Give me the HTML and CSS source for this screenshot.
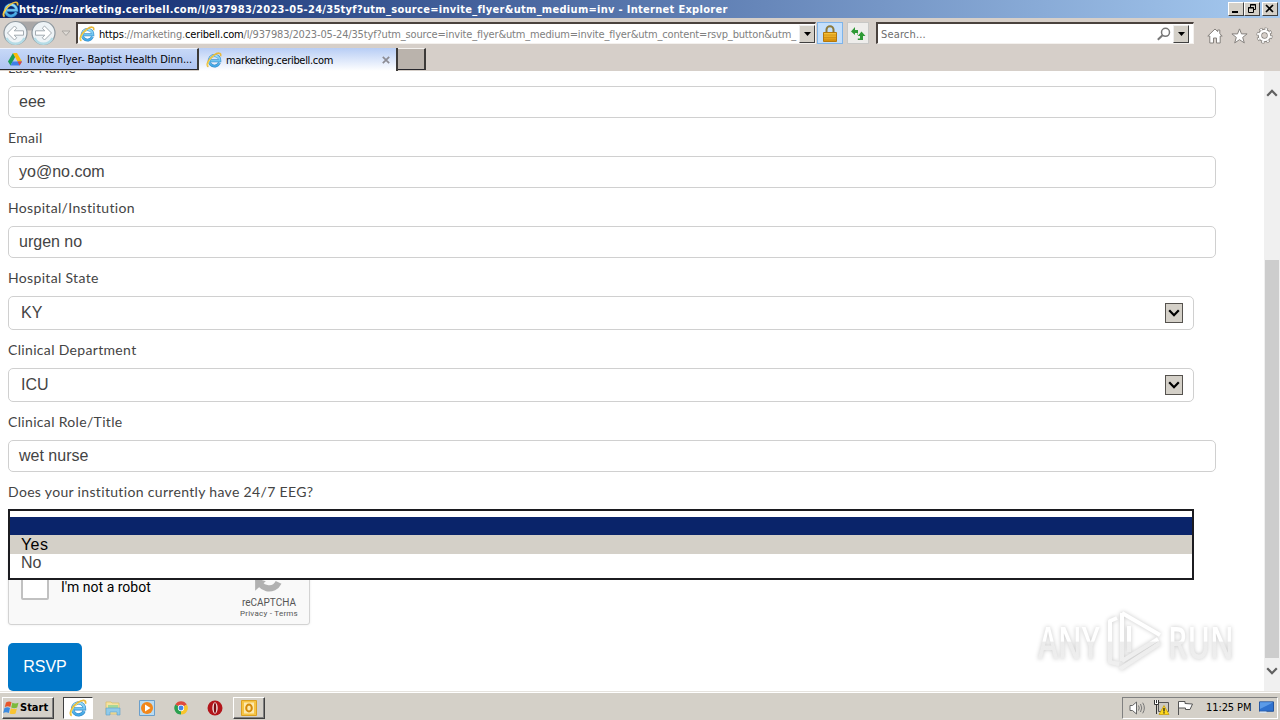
FILE: index.html
```html
<!DOCTYPE html>
<html lang="en">
<head>
    <meta charset="UTF-8">
    <title>marketing.ceribell.com</title>
    <link rel="stylesheet" href="styles.css">
</head>
<body>
    <svg class="defs" width="0" height="0">
        <defs>
            <linearGradient id="ieBlue" x1="0" y1="0" x2="0" y2="1">
                <stop offset="0" stop-color="#9be0fa"/>
                <stop offset="1" stop-color="#3fa5e4"/>
            </linearGradient>
            <linearGradient id="goldLock" x1="0" y1="0" x2="0" y2="1">
                <stop offset="0" stop-color="#f8c63c"/>
                <stop offset="1" stop-color="#d98e08"/>
            </linearGradient>
            <linearGradient id="markFade" gradientUnits="userSpaceOnUse" x1="0" y1="0" x2="0" y2="66">
                <stop offset="0" stop-color="#ffffff"/>
                <stop offset="0.5" stop-color="#ffffff"/>
                <stop offset="0.52" stop-color="#ededed"/>
                <stop offset="1" stop-color="#f0f0f0"/>
            </linearGradient>
        </defs>
        <symbol id="ie" viewBox="0 0 16 16">
            <path d="M13.4 10.8A5.300 5.300 0 1 1 13.800 8.700H4.600" fill="none" stroke="#3587c5" stroke-width="2.900"/>
            <path d="M13.4 10.800A5.300 5.300 0 1 1 13.800 8.700H4.600" fill="none" stroke="url(#ieBlue)" stroke-width="1.900"/>
            <path d="M2.400 14.800C-.6 13.400 2.600 7 7.600 3.400 11.800.4 15.600.2 14.600 4.200" fill="none" stroke="#e9b93a" stroke-width="1.600"/>
            <path d="M2.200 14C.6 12.400 3.600 7 8 3.800" fill="none" stroke="#ffe25e" stroke-width=".8"/>
        </symbol>
        <symbol id="chevron" viewBox="0 0 12 8">
            <path d="M1.200 1.200 6 6.200l4.800-5" fill="none" stroke="currentColor" stroke-width="2.200"/>
        </symbol>
    </svg>

    <div class="titlebar">
        <svg class="ie-icon" width="17" height="17"><use href="#ie"/></svg>
        <span class="title">https://marketing.ceribell.com/l/937983/2023-05-24/35tyf?utm_source=invite_flyer&amp;utm_medium=inv - Internet Explorer</span>
        <div class="win-buttons">
            <span class="win-btn"><svg width="13" height="11"><path d="M3 8h6v2H3z"/></svg></span>
            <span class="win-btn"><svg width="13" height="11"><path d="M5.500 4V1.500h5v5H8M5 2h6M3.500 4.500h5v5h-5zM3 5h6" fill="none" stroke="#000"/></svg></span>
            <span class="win-btn close"><svg width="13" height="11"><path d="M3 2l7 7M10 2L3 9" stroke="#000" stroke-width="1.700"/></svg></span>
        </div>
    </div>

    <div class="toolbar">
        <div class="nav">
            <svg width="74" height="28" viewBox="0 0 74 28">
                <path d="M15 2.500h29v4q-8 5-14.500 5T15 6.500z" fill="#a9a7a7"/>
                <g fill="#eef3f6" stroke="#8d979e" stroke-width="1.200">
                    <circle cx="15.500" cy="14" r="11.500"/>
                    <circle cx="43.500" cy="14" r="11.500"/>
                </g>
                <path d="M6.500 19a10 10 0 0 0 18 0M34.500 19a10 10 0 0 0 18 0" fill="none" stroke="#b5dce6" stroke-width="2.500"/>
                <g fill="#fff" stroke="#a3abb1">
                    <path d="M7.500 14l7-7 2.200 2.200-2.500 2.600H23.500v4.400h-9.300l2.500 2.600-2.200 2.200z"/>
                    <path d="M51.500 14l-7-7-2.200 2.200 2.500 2.600H35.500v4.400h9.300l-2.500 2.600 2.200 2.200z"/>
                </g>
                <path d="M62 12h8l-4 4.500z" fill="#dedad5" stroke="#aaa6a2"/>
            </svg>
        </div>
        <div class="address">
            <svg class="ie-icon" width="16" height="16"><use href="#ie"/></svg>
            <span class="url"><b>https</b>://marketing.<b>ceribell.com</b>/l/937983/2023-05-24/35tyf?utm_source=invite_flyer&amp;utm_medium=invite_flyer&amp;utm_content=rsvp_button&amp;utm_</span>
            <span class="drop-btn"><svg width="7" height="4"><path d="M0 0h7L3.500 4z"/></svg></span>
        </div>
        <div class="lock">
            <svg width="14" height="17" viewBox="0 0 14 17">
                <path d="M3.500 8V4.500a3.500 3.300 0 0 1 7 0V8" fill="none" stroke="#8c7a3c" stroke-width="2"/>
                <path d="M.5 7.500h13v9H.5z" fill="url(#goldLock)" stroke="#b4780c"/>
                <path d="M1 10h12M1 12.500h12M1 15h12" stroke="#c98a10" stroke-width=".7"/>
            </svg>
        </div>
        <div class="refresh">
            <svg width="15" height="13" viewBox="0 0 15 13">
                <path d="M4 0 0 4.500 4 8V6h2.500v2H7V3H4zM10.500 4.500 6.800 9H9v2.500H6.800V13H12V9h2.500z" fill="#2e9a35"/>
            </svg>
        </div>
        <div class="search">
            <span class="search-text">Search...</span>
            <svg width="14" height="14" viewBox="0 0 14 14" fill="none" stroke="#777">
                <circle cx="8.500" cy="5.300" r="4" stroke-width="1.500"/><path d="M5.500 8.300.8 12.800" stroke-width="2"/>
            </svg>
            <span class="drop-btn"><svg width="7" height="4"><path d="M0 0h7L3.500 4z"/></svg></span>
        </div>
        <div class="commands">
            <svg width="16" height="16" viewBox="0 0 16 16"><path d="M8 1 .8 8h2v7h3.700v-5h3v5h3.700V8h2L12.800 5.700V2H10.700v1.600z" fill="#fff" stroke="#85817d"/></svg>
            <svg width="17" height="16" viewBox="0 0 17 16"><path d="m8.500.9 2 5h5.600l-4.400 3.500 1.600 5.500-4.800-3.200-4.800 3.200 1.600-5.500L.9 5.900h5.600z" fill="#fff" stroke="#85817d"/></svg>
            <svg width="17" height="17" viewBox="0 0 17 17">
                <circle cx="8.500" cy="8.500" r="6.600" fill="none" stroke="#85817d" stroke-width="3" stroke-dasharray="3.100 2.080"/>
                <circle cx="8.500" cy="8.500" r="4.600" fill="none" stroke="#85817d" stroke-width="4.200"/>
                <circle cx="8.500" cy="8.500" r="6.600" fill="none" stroke="#fff" stroke-width="1.800" stroke-dasharray="1.900 3.280" stroke-dashoffset="-.6"/>
                <circle cx="8.500" cy="8.500" r="4.500" fill="none" stroke="#fff" stroke-width="2.600"/>
            </svg>
        </div>
    </div>

    <div class="tabs">
        <div class="tab drive">
            <svg width="14" height="13" viewBox="0 0 14 13">
                <path d="M5 0 0 8.600 2.500 12.500 7.200 4z" fill="#1c9e57"/>
                <path d="M5 0h4l5 8.600H9.500z" fill="#fbbc05"/>
                <path d="M4.600 8.600H14l-2.400 3.900H2.500z" fill="#3f7ee8"/>
                <path d="M9.500 8.600H14l-2.400 3.900z" fill="#e54335"/>
            </svg>
            <span class="tab-text">Invite Flyer- Baptist Health Dinn...</span>
        </div>
        <div class="tab active">
            <svg width="16" height="16"><use href="#ie"/></svg>
            <span class="tab-text">marketing.ceribell.com</span>
            <svg class="tab-close" width="8" height="8"><path d="M.8.8l6.400 6.400M7.200.8.8 7.200" stroke="#8c8c94" stroke-width="1.700"/></svg>
        </div>
        <div class="tab new"></div>
    </div>

    <div class="viewport">
        <form class="form">
            <div class="field">
                <label>Last Name</label>
                <div class="input">eee</div>
            </div>
            <div class="field">
                <label>Email</label>
                <div class="input">yo@no.com</div>
            </div>
            <div class="field">
                <label>Hospital/Institution</label>
                <div class="input">urgen no</div>
            </div>
            <div class="field">
                <label>Hospital State</label>
                <div class="select">KY<span class="select-btn"><svg width="12" height="8"><use href="#chevron"/></svg></span></div>
            </div>
            <div class="field">
                <label>Clinical Department</label>
                <div class="select">ICU<span class="select-btn"><svg width="12" height="8"><use href="#chevron"/></svg></span></div>
            </div>
            <div class="field">
                <label>Clinical Role/Title</label>
                <div class="input">wet nurse</div>
            </div>
            <div class="field">
                <label>Does your institution currently have 24/7 EEG?</label>
                <div class="select open">
                    <div class="options">
                        <div class="option selected"></div>
                        <div class="option hover">Yes</div>
                        <div class="option">No</div>
                    </div>
                </div>
            </div>
            <div class="captcha">
                <span class="checkbox"></span>
                <span class="captcha-label">I'm not a robot</span>
                <div class="captcha-brand">
                    <svg width="32" height="32" viewBox="0 0 30 30" fill="none" stroke-width="6">
                        <path d="M5 15A10 10 0 0 1 15 5" stroke="#9fbdf0"/>
                        <path d="M15 5a10 10 0 0 1 10 10" stroke="#4a6cb5"/>
                        <path d="M5 16a10 10 0 0 0 19 4" stroke="#b1b1b1"/>
                        <path d="M2 16v12l10-9z" fill="#b1b1b1" stroke="none"/>
                    </svg>
                    <span class="brand-name">reCAPTCHA</span>
                    <span class="brand-links">Privacy - Terms</span>
                </div>
            </div>
            <div class="submit">RSVP</div>
        </form>
        <div class="scrollbar">
            <svg width="12" height="8"><use href="#chevron" transform="rotate(180 6 4)"/></svg>
            <div class="thumb"></div>
            <svg width="12" height="8"><use href="#chevron"/></svg>
        </div>
        <div class="watermark">
            <span class="any">ANY</span>
            <svg width="60" height="66" viewBox="0 0 60 66" fill="none" stroke="url(#markFade)" stroke-width="4" stroke-linejoin="round">
                <path d="M17 5v48M17 5l38 22"/>
                <path d="M12 10 5 13v41l9 2M15 61l40-26M17 53l36-22M24 18v26"/>
            </svg>
            <span class="run">RUN</span>
        </div>
    </div>

    <div class="taskbar">
        <div class="start">
            <svg width="17" height="16" viewBox="0 0 17 16">
                <path d="M3 2.500q3-2 5.500-.3L7.300 7Q5 5.500 1.800 7z" fill="#e8562a"/>
                <path d="M9.300 2.700q3 1.500 6.200 0L14.200 7.500q-3 1.400-6 0z" fill="#7cba3d"/>
                <path d="M1.500 8q3-1.500 5.500 0l-1.200 5Q3 11.500.2 13z" fill="#3c8be0"/>
                <path d="M7.900 8.300q3 1.500 6 .2l-1.300 4.900q-3 1.400-6 0z" fill="#f9c431"/>
            </svg>
            <span>Start</span>
        </div>
        <div class="task pressed"><svg width="18" height="18"><use href="#ie"/></svg></div>
        <div class="task">
            <svg width="16" height="16" viewBox="0 0 16 16">
                <path d="M1 2h5l1 1h7v11H1z" fill="#f5e2a0" stroke="#d9bc62" stroke-width=".7"/>
                <path d="M3 5h10v3H3z" fill="#a5d89a"/>
                <path d="M1 8h14v7h-3v-3H5v3H1z" fill="#8fcaea" stroke="#5a9fca" stroke-width=".6"/>
            </svg>
        </div>
        <div class="task">
            <svg width="16" height="16" viewBox="0 0 16 16">
                <path d="M.5.5h15v15H.5z" fill="#b9dbf2" stroke="#6b9fcb"/>
                <circle cx="8" cy="8" r="6" fill="#f2871b"/><path d="M6 4.500v7L11.500 8z" fill="#fff"/>
            </svg>
        </div>
        <div class="task">
            <svg width="14" height="14" viewBox="0 0 16 16">
                <path d="M8 8 1.500 4A7.500 7.500 0 0 1 14.600 4z" fill="#df4a3d"/>
                <path d="M8 8l6.600-4A7.500 7.500 0 0 1 8 15.500z" fill="#f8c52c"/>
                <path d="M8 8v7.500A7.500 7.500 0 0 1 1.500 4z" fill="#2ba04f"/>
                <circle cx="8" cy="8" r="3.600" fill="#fff"/><circle cx="8" cy="8" r="2.800" fill="#4285e8"/>
            </svg>
        </div>
        <div class="task">
            <svg width="16" height="16" viewBox="0 0 16 16">
                <ellipse cx="8" cy="8" rx="7.500" ry="7.600" fill="#b3151b"/><ellipse cx="8" cy="8" rx="2.700" ry="5.800" fill="#f3dada"/><ellipse cx="8" cy="8" rx="1.200" ry="5" fill="#7a0c10"/>
            </svg>
        </div>
        <div class="task raised">
            <svg width="16" height="16" viewBox="0 0 16 16">
                <path d="M.5.5h15v15H.5z" fill="#f6c444" stroke="#dba022"/>
                <path d="M3 2.500h10v11H3z" fill="#fce9ae"/>
                <ellipse cx="8" cy="8" rx="2.800" ry="3.500" fill="none" stroke="#d48a0a" stroke-width="2"/>
            </svg>
        </div>
        <div class="tray">
            <svg width="17" height="16" viewBox="0 0 17 16">
                <path d="M1 5.500h2.500L7.500 2v12l-4-3.500H1z" fill="#fff" stroke="#666"/>
                <path d="M9.500 5.500q1.500 2.500 0 5M11.500 4q2.500 4 0 8M13.700 2.700q3.300 5.300 0 10.600" fill="none" stroke="#777"/>
            </svg>
            <svg width="17" height="17" viewBox="0 0 17 17">
                <path d="M5.500 3.500h10v9h-10z" fill="#ccc9c0" stroke="#555"/>
                <path d="M1.500 1v4.500h4V1M3.500 1v3M3.500 5.500V15" fill="#fff" stroke="#333"/>
                <path d="M11 6.500l5 9H6z" fill="#ffd91c" stroke="#c39800" stroke-width=".7"/><path d="M11 9v3.500M11 13.300v1.200" stroke="#222" stroke-width="1.300"/>
            </svg>
            <svg width="17" height="16" viewBox="0 0 17 16"><path d="M1.500 15V1.500h6.500v2l7.500.5-2.500 5.500H8.500V8H2" fill="#fff" stroke="#555"/></svg>
            <span class="clock">11:25 PM</span>
            <svg class="desktop" width="15" height="13" viewBox="0 0 16 13"><path d="M.5.5h15v10H.5z" fill="#2f72cf" stroke="#1b4d99"/><path d="M1 1h14L1 8z" fill="#5b9be8"/><path d="M1 11.500h7" stroke="#d7e6f5" stroke-width="1.500"/></svg>
        </div>
    </div>
</body>
</html>
```
FILE: styles.css
```css
* {
    box-sizing: border-box;
}
body {
    margin: 0;
    width: 1280px;
    height: 720px;
    overflow: hidden;
    display: flex;
    flex-direction: column;
    background: #fff;
    font-family: "DejaVu Sans Condensed", "DejaVu Sans", sans-serif;
    font-size: 11px;
    white-space: nowrap;
}
svg {
    display: block;
    flex: none;
}
.defs {
    position: absolute;
}

/* title bar */
.titlebar {
    height: 18px;
    flex: none;
    display: flex;
    align-items: center;
    padding: 0 2px;
    background: linear-gradient(to right, #0a246a, #a6caf0);
    color: #fff;
}
.title {
    font-family: "DejaVu Sans", sans-serif;
    font-stretch: condensed;
    font-weight: bold;
    font-size: 11px;
    letter-spacing: 0.295px;
}
.win-buttons {
    display: flex;
    margin-left: auto;
}
.win-btn {
    width: 16px;
    height: 14px;
    background: #d4d0c8;
    border: 1px solid;
    border-color: #fff #404040 #404040 #fff;
}
.win-btn.close {
    margin-left: 2px;
}

/* address row */
.toolbar {
    height: 30px;
    flex: none;
    display: flex;
    align-items: center;
    background: #d6cfc9;
}
.nav {
    width: 76px;
}
.address, .search {
    height: 22px;
    display: flex;
    align-items: center;
    background: #fff;
    border: 1px solid #f4f1ee;
    border-top: 2px solid #4a423e;
    border-left: 2px solid #4a423e;
}
.address {
    width: 740px;
    padding-left: 1px;
}
.url {
    margin-left: 4px;
    padding-top: 1px;
    color: #808080;
    flex: 1;
    min-width: 0;
    letter-spacing: -0.165px;
}
.url b {
    font-weight: normal;
    color: #000;
}
.drop-btn {
    width: 16px;
    height: 18px;
    display: flex;
    align-items: center;
    justify-content: center;
    background: #d4d0c8;
    border: 1px solid;
    border-color: #eee #404040 #404040 #eee;
    flex: none;
}
.lock, .refresh {
    height: 22px;
    display: flex;
    align-items: center;
    justify-content: center;
}
.lock {
    width: 26px;
    margin-left: 1px;
    background: #c4dffb;
    border: 1px solid #7eb4ea;
}
.refresh {
    width: 22px;
    margin-left: 4px;
    background: #eeedeb;
    border: 1px solid #c8c8c6;
}
.search {
    width: 318px;
    margin-left: 7px;
    padding: 0 4px 0 3px;
}
.search-text {
    flex: 1;
    padding-top: 1px;
    color: #6d6d6d;
    letter-spacing: 0.15px;
}
.search .drop-btn {
    margin-left: 2px;
}
.commands {
    display: flex;
    align-items: center;
    gap: 8px;
    padding: 5px 0 0 13px;
}

/* tabs */
.tabs {
    height: 23px;
    flex: none;
    display: flex;
    background: #d6cfc9;
}
.tab {
    height: 22px;
    display: flex;
    align-items: center;
    color: #000;
    border-right: 2px solid #3c3a38;
}
.tab.drive {
    width: 199px;
    padding-left: 8px;
    background: linear-gradient(#c6d8f7, #afc4f1);
    border-top: 1px solid #eef3ff;
    border-bottom: 1px solid #27272c;
}
.tab-text {
    padding-top: 1px;
}
.drive .tab-text {
    margin-left: 5px;
    letter-spacing: -0.06px;
}
.tab.active {
    width: 199px;
    height: 23px;
    padding-left: 7px;
    background: linear-gradient(#b7cdf5, #fff);
}
.active .tab-text {
    margin-left: 4px;
    letter-spacing: -0.32px;
}
.tab-close {
    margin: 0 6px 0 auto;
}
.tab.new {
    width: 28px;
    background: #bab3ac;
    border-top: 1px solid #f5f2ef;
    border-bottom: 1px solid #27272c;
}

/* page */
.viewport {
    position: relative;
    height: 620px;
    overflow: hidden;
    display: flex;
    justify-content: space-between;
    color: #444;
}
.form {
    width: 1208px;
    margin: -13px 0 0 8px;
}
.field {
    margin-bottom: 10px;
}
label {
    display: block;
    height: 20px;
    margin-bottom: 8px;
    font: 14px/20px Lato, sans-serif;
    letter-spacing: 0.33px;
}
.input, .select {
    display: flex;
    align-items: center;
    border: 1px solid #d0d0d0;
    border-radius: 5px;
    font-family: "Liberation Sans", Arial, sans-serif;
    font-size: 16px;
}
.input {
    height: 32px;
    padding: 0 10px;
}
.select {
    position: relative;
    width: 1186px;
    height: 34px;
    padding: 0 10px 0 12px;
}
.select-btn {
    width: 18px;
    height: 20px;
    margin-left: auto;
    display: flex;
    align-items: center;
    justify-content: center;
    background: #d4d0c8;
    border: 1px solid #55524e;
    color: #000;
}
.select.open {
    border: none;
}
.options {
    position: absolute;
    left: 0;
    top: -1px;
    z-index: 2;
    width: 1186px;
    height: 71px;
    padding-top: 6px;
    background: #fff;
    border: 2px solid #1c1c20;
}
.option {
    height: 18px;
    line-height: 18px;
    padding-left: 11px;
}
.option.selected {
    background: #0a246a;
}
.option.hover {
    height: 19px;
    line-height: 19px;
    background: #d4d0c8;
    color: #000;
    letter-spacing: 0.4px;
}
.captcha {
    width: 302px;
    height: 76px;
    margin: -5px 0 18px;
    display: flex;
    align-items: center;
    padding: 0 11px 0 12px;
    background: #f9f9f9;
    border: 1px solid #d3d3d3;
    border-radius: 3px;
    box-shadow: 0 0 3px rgba(0,0,0,0.08);
    font-family: Roboto, sans-serif;
}
.checkbox {
    width: 28px;
    height: 28px;
    margin-top: -2px;
    background: #fff;
    border: 2px solid #c1c1c1;
    border-radius: 2px;
}
.captcha-label {
    margin-left: 12px;
    font-size: 14px;
    color: #000;
}
.captcha-brand {
    margin: 0 0 -7px auto;
    display: flex;
    flex-direction: column;
    align-items: center;
    color: #555;
}
.brand-name {
    margin-top: 4px;
    font-size: 10px;
    line-height: 11px;
}
.brand-links {
    font-size: 8px;
    line-height: 12px;
    letter-spacing: 0.25px;
}
.submit {
    width: 74px;
    height: 48px;
    line-height: 47px;
    text-align: center;
    background: #0077c8;
    border-radius: 5px;
    color: #fff;
    font-family: "Liberation Sans", Arial, sans-serif;
    font-size: 16px;
}
.scrollbar {
    width: 16px;
    display: flex;
    flex-direction: column;
    align-items: center;
    padding: 18px 0 16px;
    background: #f0f0f0;
    color: #606060;
}
.thumb {
    width: 14px;
    height: 398px;
    margin: 163px 0 9px;
    background: #cdcdcd;
}
.watermark {
    position: absolute;
    left: 1038px;
    top: 537px;
    display: flex;
    align-items: center;
    font: 600 46px/66px "Open Sans", sans-serif;
    filter: drop-shadow(0 0 2px rgba(0,0,0,0.22));
}
.any, .run {
    width: 64px;
    transform: scaleX(0.66);
    transform-origin: left;
    background: linear-gradient(#fff 50%, #ececec 52%, #f0f0f0);
    background-clip: text;
    -webkit-background-clip: text;
    color: transparent;
    overflow: visible;
}
.any, .run {
    width: 100px;
    margin-right: -36px;
}
.watermark svg {
    margin: 0 3px 0 3px;
}

/* taskbar */
.taskbar {
    height: 29px;
    flex: none;
    display: flex;
    align-items: center;
    padding: 3px 2px 0;
    background: #d4d0c8;
    border-top: 1px solid #e6e3de;
    box-shadow: inset 0 1px #fff;
}
.start, .task.raised {
    background: #d4d0c8;
    border: 1px solid;
    border-color: #fff #404040 #404040 #fff;
    box-shadow: inset -1px -1px #808080;
}
.start {
    width: 52px;
    height: 22px;
    display: flex;
    align-items: center;
    color: #000;
    font-weight: bold;
    margin-right: 9px;
}
.task {
    width: 28px;
    height: 22px;
    margin-right: 6px;
    display: flex;
    align-items: center;
    justify-content: center;
}
.task.pressed {
    width: 30px;
    background: #fff;
    border: 1px solid;
    border-color: #404040 #fff #fff #404040;
}
.task.raised {
    width: 32px;
    margin-left: -2px;
}
.tray {
    width: 156px;
    height: 22px;
    margin-left: auto;
    display: flex;
    align-items: center;
    gap: 7px;
    padding-left: 6px;
    border: 1px solid;
    border-color: #808080 #fff #fff #808080;
}
.clock {
    margin-left: 5px;
    color: #000;
    letter-spacing: -0.1px;
}
.desktop {
    margin-left: 1px;
}
```
